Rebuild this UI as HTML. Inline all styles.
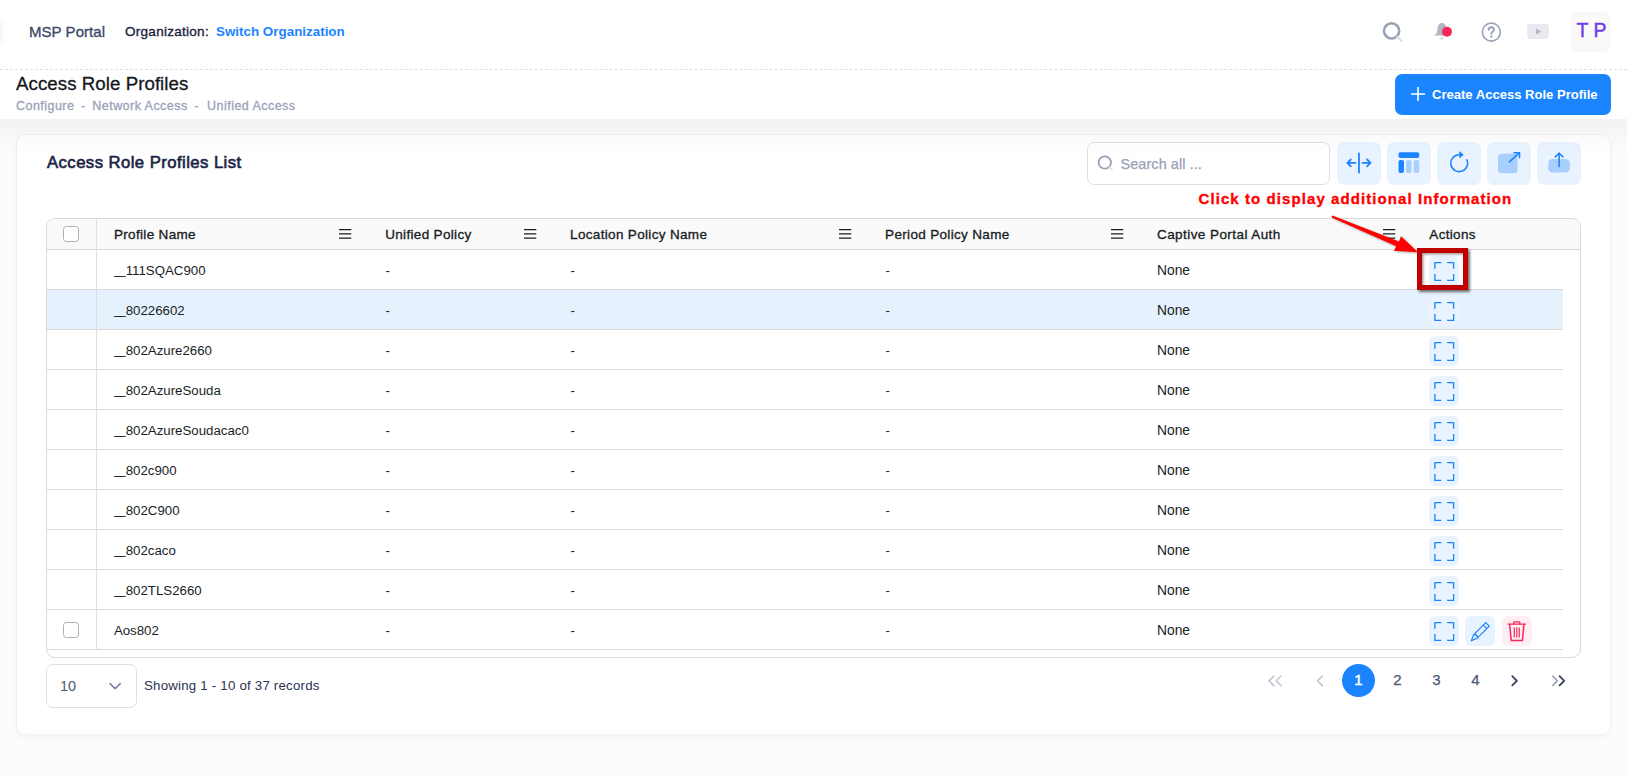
<!DOCTYPE html>
<html>
<head>
<meta charset="utf-8">
<title>Access Role Profiles</title>
<style>
*{box-sizing:border-box;margin:0;padding:0}
html,body{width:1627px;height:776px;overflow:hidden;background:#fcfcfc;font-family:"Liberation Sans",sans-serif;}
.abs{position:absolute}
.t{position:absolute;white-space:nowrap;line-height:1}
#hdr{position:absolute;left:0;top:0;width:1627px;height:70px;background:#fff;border-bottom:1px dashed #dbdfe9}
#tool{position:absolute;left:0;top:70px;width:1627px;height:49px;background:#fff}
#shade{position:absolute;left:0;top:119px;width:1627px;height:40px;background:linear-gradient(rgba(60,50,80,.05),rgba(60,50,80,.028) 35%,rgba(60,50,80,.008) 70%,rgba(60,50,80,0));z-index:5;pointer-events:none}
#card{position:absolute;left:16px;top:134px;width:1595px;height:601px;background:#fff;border:1px solid #f1f1f4;border-radius:9px;box-shadow:0 3px 4px rgba(0,0,0,.03)}
.btnl{position:absolute;top:142px;width:43.500px;height:43px;background:#e9f3ff;border-radius:7px}
#grid{position:absolute;left:46px;top:218px;width:1535px;height:440px;border:1px solid #d9d9d9;border-radius:9px;background:#fff;overflow:hidden}
#ghead{position:absolute;left:0;top:0;width:1533px;height:31px;background:#fafafa;border-bottom:1px solid #d9d9d9}
.row{position:absolute;left:0;width:1516px;height:40px;border-bottom:1px solid #d9d9d9}
.hl{background:#e5f1fc}
.vsep{position:absolute;left:49px;top:0;width:1px;height:430px;background:#e0e0e0}
.h{position:absolute;top:8px;font-size:13.500px;font-weight:400;color:#181d1f;white-space:nowrap;line-height:15px;letter-spacing:0.330px;-webkit-text-stroke:0.330px #181d1f}
.c{position:absolute;top:13px;font-size:13.25px;color:#181d1f;white-space:nowrap;line-height:15px}
.c i{font-style:normal;letter-spacing:-3.100px;position:relative;top:-1.200px;margin-right:3.300px}
.menu{position:absolute;top:11px;width:12px;height:10px}
.menu b{position:absolute;left:0;width:12px;height:1.250px;background:#181d1f}
.ab{position:absolute;top:6px;width:30px;height:30px;border-radius:6px;background:#e9f3ff}
.cb{position:absolute;width:16px;height:16px;border:1px solid #aeb0b9;border-radius:3.500px;background:#fff}
.pg{position:absolute;top:671px;font-size:15px;color:#4b5675;-webkit-text-stroke:0.250px #4b5675;white-space:nowrap;line-height:17px;width:20px;text-align:center}
</style>
</head>
<body>
<div id="hdr"></div>
<div id="tool"></div>
<div id="shade"></div>
<div id="card"></div>
<div class="abs" style="left:-4px;top:20px;width:5px;height:24px;background:#f4f4f5;border-radius:0 3px 3px 0;box-shadow:0 0 9px 3px rgba(0,0,0,.035)"></div>
<div class="t" style="left:29px;top:24px;font-size:15px;color:#414a6a;letter-spacing:0.05px;-webkit-text-stroke:0.350px #414a6a">MSP Portal</div>
<div class="t" style="left:125px;top:24.500px;font-size:13.500px;color:#1b2340;letter-spacing:0.280px;-webkit-text-stroke:0.350px #1b2340">Organization:</div>
<div class="t" style="left:216px;top:25px;font-size:13.4px;font-weight:700;color:#1b84ff">Switch Organization</div>
<svg class="abs" style="left:1378px;top:18px" width="28" height="28" viewBox="0 0 28 28"><circle cx="13.6" cy="12.9" r="7.6" fill="none" stroke="#99a1b7" stroke-width="2.6"/><path d="M19.4 19.2L23.4 22.8" stroke="#dfe2ea" stroke-width="2.6" stroke-linecap="round"/></svg>
<svg class="abs" style="left:1428px;top:18px" width="28" height="28" viewBox="0 0 28 28"><path d="M6.6 16.6c2.6-.6 2.6-3.2 2.9-6.4C9.8 7 11.600 5 14 5s4.200 2 4.500 5.200c.3 3.200.3 5.800 2.900 6.400v1H6.6z" fill="#b5b5c3"/><circle cx="14" cy="20.300" r="1.800" fill="#e1e3ea"/><circle cx="19" cy="13.800" r="5" fill="#f8285a"/></svg>
<svg class="abs" style="left:1477px;top:18px" width="28" height="28" viewBox="0 0 28 28"><circle cx="14.300" cy="14.100" r="9" fill="none" stroke="#99a1b7" stroke-width="1.600"/><path d="M11.600 11.800c0-1.600 1.200-2.600 2.700-2.600s2.700 1 2.700 2.400c0 2-2.700 2-2.700 4.200" fill="none" stroke="#99a1b7" stroke-width="1.900" stroke-linecap="round"/><circle cx="14.300" cy="18.700" r="1.150" fill="#99a1b7"/></svg>
<svg class="abs" style="left:1524px;top:18px" width="28" height="28" viewBox="0 0 28 28"><rect x="3.200" y="5.900" width="21.600" height="15" rx="3" fill="#e9e9ef"/><path d="M12 10.200v6.400l5.400-3.200z" fill="#b5b5c3"/></svg>
<div class="abs" style="left:1571px;top:12px;width:40px;height:40px;background:#f9f9f9;border-radius:7px"></div>
<div class="t" style="left:1576.500px;top:21px;font-size:19.500px;color:#7239ea;letter-spacing:0px;-webkit-text-stroke:0.450px #7239ea">T P</div>

<div class="t" style="left:16px;top:74px;font-size:18.700px;color:#15171c;line-height:20px;-webkit-text-stroke:0.300px #15171c;letter-spacing:0.050px">Access Role Profiles</div>
<div class="t" id="bc" style="left:0;top:99px;font-size:12.500px;color:#99a1b7;line-height:14px;letter-spacing:0.460px;-webkit-text-stroke:0.300px #99a1b7"><span class="abs" style="left:16px">Configure</span><span class="abs" style="left:81px">-</span><span class="abs" style="left:92.300px">Network Access</span><span class="abs" style="left:194.300px">-</span><span class="abs" style="left:207.100px">Unified Access</span></div>
<div class="abs" style="left:1395px;top:74px;width:216px;height:41px;background:#1b84ff;border-radius:7px"></div>
<svg class="abs" style="left:1410px;top:86px" width="16" height="16" viewBox="0 0 16 16"><path d="M8 1v14M1 8h14" stroke="#fff" stroke-width="1.600"/></svg>
<div class="t" style="left:1432px;top:87px;font-size:13.050px;font-weight:700;color:#fff;line-height:15px">Create Access Role Profile</div>

<div class="t" style="left:47px;top:153px;font-size:16.700px;color:#1b2644;line-height:19px;letter-spacing:0.440px;-webkit-text-stroke:0.650px #1b2644">Access Role Profiles List</div>
<div class="abs" style="left:1087px;top:142px;width:243px;height:43px;border:1px solid #dbdfe9;border-radius:7px;background:#fff"></div>
<svg class="abs" style="left:1096px;top:154px" width="18" height="18" viewBox="0 0 18 18"><circle cx="8.800" cy="8.500" r="6.200" fill="none" stroke="#99a1b7" stroke-width="1.800"/><path d="M13.600 13.400L16 15.600" stroke="#dfe2ea" stroke-width="1.800" stroke-linecap="round"/></svg>
<div class="t" style="left:1120.500px;top:156px;font-size:14.500px;color:#99a1b7;line-height:17px;letter-spacing:0.05px;-webkit-text-stroke:0.250px #99a1b7">Search all ...</div>
<div class="btnl" style="left:1337px"></div>
<div class="btnl" style="left:1387px"></div>
<div class="btnl" style="left:1437px"></div>
<div class="btnl" style="left:1487px"></div>
<div class="btnl" style="left:1537px"></div>
<svg class="abs" style="left:1337px;top:142px" width="44" height="43" viewBox="0 0 44 43"><g fill="none" stroke="#1b84ff" stroke-width="1.800" stroke-linecap="round" stroke-linejoin="round"><path d="M21.950 11.400v19.200"/><path d="M18.400 20.900h-7.800M13.800 17.500l-3.400 3.400 3.400 3.400"/><path d="M25.500 20.900h7.800M30.100 17.500l3.400 3.400-3.400 3.400"/></g></svg>
<svg class="abs" style="left:1387px;top:142px" width="44" height="43" viewBox="0 0 44 43"><rect x="11.500" y="10.300" width="20.800" height="5.600" rx="1.900" fill="#1b84ff"/><rect x="11.500" y="18" width="5.500" height="12.900" rx="1.900" fill="#1b84ff"/><rect x="19" y="18" width="5.500" height="12.900" rx="1.900" fill="#a9cfff"/><rect x="26.800" y="18" width="5.500" height="12.900" rx="1.900" fill="#a9cfff"/></svg>
<svg class="abs" style="left:1447px;top:150.600px" width="24.430" height="24.430" viewBox="0 0 16 16" fill="#1b84ff"><path fill-rule="evenodd" d="M8 3a5 5 0 1 0 4.546 2.914.5.5 0 0 1 .908-.417A6 6 0 1 1 8 2z"/><path d="M8 4.466V.534a.25.25 0 0 1 .41-.192l2.360 1.966c.12.1.12.284 0 .384L8.410 4.658A.25.25 0 0 1 8 4.466"/></svg>
<svg class="abs" style="left:1487px;top:142px" width="44" height="43" viewBox="0 0 44 43"><rect x="11" y="11.800" width="19.500" height="19.400" rx="3.600" fill="#a9cfff"/><g fill="none" stroke="#1b84ff" stroke-width="1.600" stroke-linecap="round" stroke-linejoin="round"><path d="M22.400 19.800l9.800-8.900"/><path d="M27 10.700h5.500v5"/></g></svg>
<svg class="abs" style="left:1537px;top:142px" width="44" height="43" viewBox="0 0 44 43"><rect x="11.200" y="16.900" width="21.700" height="13.700" rx="4.600" fill="#a9cfff"/><g fill="none" stroke="#1b84ff" stroke-width="1.600" stroke-linecap="round" stroke-linejoin="round"><path d="M22.100 24.600V11.400"/><path d="M18.300 14.900l3.800-3.700 3.800 3.700"/></g></svg>
<div id="grid"><div id="ghead"><div class="cb" style="left:16.200px;top:7px"></div><div class="h" style="left:66.9px">Profile Name</div><svg class="abs" style="left:292px;top:9px" width="13" height="12" viewBox="0 0 13 12"><path d="M0 1.700h12.300M0 5.950h12.300M0 10.200h12.300" stroke="#181d1f" stroke-width="1.250" fill="none"/></svg><div class="h" style="left:338.2px">Unified Policy</div><svg class="abs" style="left:476.5px;top:9px" width="13" height="12" viewBox="0 0 13 12"><path d="M0 1.700h12.300M0 5.950h12.300M0 10.200h12.300" stroke="#181d1f" stroke-width="1.250" fill="none"/></svg><div class="h" style="left:523.1px">Location Policy Name</div><svg class="abs" style="left:792px;top:9px" width="13" height="12" viewBox="0 0 13 12"><path d="M0 1.700h12.300M0 5.950h12.300M0 10.200h12.300" stroke="#181d1f" stroke-width="1.250" fill="none"/></svg><div class="h" style="left:838.1px">Period Policy Name</div><svg class="abs" style="left:1063.8px;top:9px" width="13" height="12" viewBox="0 0 13 12"><path d="M0 1.700h12.300M0 5.950h12.300M0 10.200h12.300" stroke="#181d1f" stroke-width="1.250" fill="none"/></svg><div class="h" style="left:1110.0px;letter-spacing:0.430px">Captive Portal Auth</div><svg class="abs" style="left:1335.8px;top:9px" width="13" height="12" viewBox="0 0 13 12"><path d="M0 1.700h12.300M0 5.950h12.300M0 10.200h12.300" stroke="#181d1f" stroke-width="1.250" fill="none"/></svg><div class="h" style="left:1382.3px">Actions</div></div><div class="row" style="top:31px"><div class="c" style="left:66.900px"><i>__</i>111SQAC900</div><div class="c" style="left:338.5px">-</div><div class="c" style="left:523.5px">-</div><div class="c" style="left:838.5px">-</div><div class="c" style="left:1110px;font-size:13.800px">None</div><div class="ab" style="left:1382px"><svg width="30" height="30" viewBox="0 0 30 30" style="display:block"><g fill="none" stroke="#1b84ff" stroke-width="1.300"><path d="M5.900 12.800V6.600h6.400M18.200 6.600h6.400v6.200M24.600 17.900v6.400h-6.400M12.300 24.300H5.900v-6.400"/></g></svg></div></div><div class="row hl" style="top:71px"><div class="c" style="left:66.900px"><i>__</i>80226602</div><div class="c" style="left:338.5px">-</div><div class="c" style="left:523.5px">-</div><div class="c" style="left:838.5px">-</div><div class="c" style="left:1110px;font-size:13.800px">None</div><div class="ab" style="left:1382px"><svg width="30" height="30" viewBox="0 0 30 30" style="display:block"><g fill="none" stroke="#1b84ff" stroke-width="1.300"><path d="M5.900 12.800V6.600h6.400M18.200 6.600h6.400v6.200M24.600 17.900v6.400h-6.400M12.300 24.300H5.900v-6.400"/></g></svg></div></div><div class="row" style="top:111px"><div class="c" style="left:66.900px"><i>__</i>802Azure2660</div><div class="c" style="left:338.5px">-</div><div class="c" style="left:523.5px">-</div><div class="c" style="left:838.5px">-</div><div class="c" style="left:1110px;font-size:13.800px">None</div><div class="ab" style="left:1382px"><svg width="30" height="30" viewBox="0 0 30 30" style="display:block"><g fill="none" stroke="#1b84ff" stroke-width="1.300"><path d="M5.900 12.800V6.600h6.400M18.200 6.600h6.400v6.200M24.600 17.900v6.400h-6.400M12.300 24.300H5.900v-6.400"/></g></svg></div></div><div class="row" style="top:151px"><div class="c" style="left:66.900px"><i>__</i>802AzureSouda</div><div class="c" style="left:338.5px">-</div><div class="c" style="left:523.5px">-</div><div class="c" style="left:838.5px">-</div><div class="c" style="left:1110px;font-size:13.800px">None</div><div class="ab" style="left:1382px"><svg width="30" height="30" viewBox="0 0 30 30" style="display:block"><g fill="none" stroke="#1b84ff" stroke-width="1.300"><path d="M5.900 12.800V6.600h6.400M18.200 6.600h6.400v6.200M24.600 17.900v6.400h-6.400M12.300 24.300H5.900v-6.400"/></g></svg></div></div><div class="row" style="top:191px"><div class="c" style="left:66.900px"><i>__</i>802AzureSoudacac0</div><div class="c" style="left:338.5px">-</div><div class="c" style="left:523.5px">-</div><div class="c" style="left:838.5px">-</div><div class="c" style="left:1110px;font-size:13.800px">None</div><div class="ab" style="left:1382px"><svg width="30" height="30" viewBox="0 0 30 30" style="display:block"><g fill="none" stroke="#1b84ff" stroke-width="1.300"><path d="M5.900 12.800V6.600h6.400M18.200 6.600h6.400v6.200M24.600 17.900v6.400h-6.400M12.300 24.300H5.900v-6.400"/></g></svg></div></div><div class="row" style="top:231px"><div class="c" style="left:66.900px"><i>__</i>802c900</div><div class="c" style="left:338.5px">-</div><div class="c" style="left:523.5px">-</div><div class="c" style="left:838.5px">-</div><div class="c" style="left:1110px;font-size:13.800px">None</div><div class="ab" style="left:1382px"><svg width="30" height="30" viewBox="0 0 30 30" style="display:block"><g fill="none" stroke="#1b84ff" stroke-width="1.300"><path d="M5.900 12.800V6.600h6.400M18.200 6.600h6.400v6.200M24.600 17.900v6.400h-6.400M12.300 24.300H5.900v-6.400"/></g></svg></div></div><div class="row" style="top:271px"><div class="c" style="left:66.900px"><i>__</i>802C900</div><div class="c" style="left:338.5px">-</div><div class="c" style="left:523.5px">-</div><div class="c" style="left:838.5px">-</div><div class="c" style="left:1110px;font-size:13.800px">None</div><div class="ab" style="left:1382px"><svg width="30" height="30" viewBox="0 0 30 30" style="display:block"><g fill="none" stroke="#1b84ff" stroke-width="1.300"><path d="M5.900 12.800V6.600h6.400M18.200 6.600h6.400v6.200M24.600 17.900v6.400h-6.400M12.300 24.300H5.900v-6.400"/></g></svg></div></div><div class="row" style="top:311px"><div class="c" style="left:66.900px"><i>__</i>802caco</div><div class="c" style="left:338.5px">-</div><div class="c" style="left:523.5px">-</div><div class="c" style="left:838.5px">-</div><div class="c" style="left:1110px;font-size:13.800px">None</div><div class="ab" style="left:1382px"><svg width="30" height="30" viewBox="0 0 30 30" style="display:block"><g fill="none" stroke="#1b84ff" stroke-width="1.300"><path d="M5.900 12.800V6.600h6.400M18.200 6.600h6.400v6.200M24.600 17.900v6.400h-6.400M12.300 24.300H5.900v-6.400"/></g></svg></div></div><div class="row" style="top:351px"><div class="c" style="left:66.900px"><i>__</i>802TLS2660</div><div class="c" style="left:338.5px">-</div><div class="c" style="left:523.5px">-</div><div class="c" style="left:838.5px">-</div><div class="c" style="left:1110px;font-size:13.800px">None</div><div class="ab" style="left:1382px"><svg width="30" height="30" viewBox="0 0 30 30" style="display:block"><g fill="none" stroke="#1b84ff" stroke-width="1.300"><path d="M5.900 12.800V6.600h6.400M18.200 6.600h6.400v6.200M24.600 17.900v6.400h-6.400M12.300 24.300H5.900v-6.400"/></g></svg></div></div><div class="row" style="top:391px"><div class="cb" style="left:16.200px;top:12px"></div><div class="c" style="left:66.900px">Aos802</div><div class="c" style="left:338.5px">-</div><div class="c" style="left:523.5px">-</div><div class="c" style="left:838.5px">-</div><div class="c" style="left:1110px;font-size:13.800px">None</div><div class="ab" style="left:1382px"><svg width="30" height="30" viewBox="0 0 30 30" style="display:block"><g fill="none" stroke="#1b84ff" stroke-width="1.300"><path d="M5.900 12.800V6.600h6.400M18.200 6.600h6.400v6.200M24.600 17.900v6.400h-6.400M12.300 24.300H5.900v-6.400"/></g></svg></div><div class="ab" style="left:1418.3px"><svg width="30" height="30" viewBox="0 0 30 30" style="display:block"><g transform="translate(5.700,6) scale(1.200)" fill="#1b84ff"><path d="M12.146.146a.5.5 0 0 1 .708 0l3 3a.5.5 0 0 1 0 .708l-10 10a.5.500 0 0 1-.168.110l-5 2a.5.500 0 0 1-.65-.65l2-5a.5.500 0 0 1 .110-.168zM11.207 2.500 13.500 4.793 14.793 3.500 12.500 1.207zm1.586 3L10.500 3.207 4 9.707V10h.5a.5.500 0 0 1 .5.500v.5h.5a.5.500 0 0 1 .5.500v.5h.293zm-9.761 5.175-.106.106-1.528 3.821 3.821-1.528.106-.106A.5.500 0 0 1 5 12.500V12h-.5a.5.500 0 0 1-.5-.5V11h-.5a.5.500 0 0 1-.468-.325"/></g></svg></div><div class="ab" style="left:1455px;background:#ffeef3"><svg width="30" height="30" viewBox="0 0 30 30" style="display:block"><g fill="none" stroke="#f8285a" stroke-linecap="round" stroke-linejoin="round"><path d="M6 8.100H23.500" stroke-width="1.300"/><path d="M11.800 8V6.400a.6.600 0 0 1 .6-.6h4.800a.6.600 0 0 1 .6.600V8" stroke-width="1.300"/><path d="M7.700 8.600l1.500 15.900h11.200l1.500-15.900" stroke-width="1.500"/><path d="M12.300 11.800V21M14.800 11.800V21M17.250 11.800V21" stroke-width="1.200"/></g></svg></div></div><div class="vsep"></div></div>

<div class="abs" style="left:46px;top:664px;width:91px;height:44px;border:1px solid #dbdfe9;border-radius:7px;background:#fff"></div>
<div class="t" style="left:60px;top:678px;font-size:14.500px;color:#4b5675;line-height:16px">10</div>
<svg class="abs" style="left:108px;top:680px" width="14" height="12" viewBox="0 0 14 12"><path d="M2 3.600l5.100 5 5.100-5" fill="none" stroke="#78829d" stroke-width="1.500" stroke-linecap="round" stroke-linejoin="round"/></svg>
<div class="t" style="left:144px;top:678px;font-size:13.300px;color:#2b3350;line-height:15px;letter-spacing:0.2px">Showing 1 - 10 of 37 records</div>
<svg class="abs" style="left:1266px;top:672px" width="20" height="18" viewBox="0 0 20 18"><g fill="none" stroke-width="1.600" stroke-linecap="round" stroke-linejoin="round"><path d="M7.800 4L3 8.800l4.800 4.800" stroke="#bcc1d1"/><path d="M15 4l-4.800 4.800 4.800 4.800" stroke="#c6cad8"/></g></svg>
<svg class="abs" style="left:1311px;top:672px" width="18" height="18" viewBox="0 0 18 18"><path d="M11.300 4L6.500 8.800l4.800 4.800" fill="none" stroke="#bcc1d1" stroke-width="1.600" stroke-linecap="round" stroke-linejoin="round"/></svg>
<div class="abs" style="left:1342px;top:664px;width:33px;height:33px;border-radius:50%;background:#1b84ff"></div>
<div class="pg" style="left:1348.500px;color:#fff;-webkit-text-stroke:0.500px #fff">1</div>
<div class="pg" style="left:1387.500px">2</div>
<div class="pg" style="left:1426.500px">3</div>
<div class="pg" style="left:1465.500px">4</div>
<svg class="abs" style="left:1505px;top:672px" width="18" height="18" viewBox="0 0 18 18"><path d="M7.300 4.200l4.600 4.600-4.600 4.600" fill="none" stroke="#363f5e" stroke-width="1.800" stroke-linecap="round" stroke-linejoin="round"/></svg>
<svg class="abs" style="left:1549px;top:672px" width="20" height="18" viewBox="0 0 20 18"><g fill="none" stroke-width="1.800" stroke-linecap="round" stroke-linejoin="round"><path d="M3.800 4.200l4.600 4.600-4.600 4.600" stroke="#a3a9bd"/><path d="M10.600 4.200l4.600 4.600-4.600 4.600" stroke="#363f5e"/></g></svg>
<div class="t" style="left:1198.500px;top:190px;font-size:15px;font-weight:700;color:#ff0000;line-height:17px;letter-spacing:1.080px;-webkit-text-stroke:0.350px #ff0000">Click to display additional Information</div>
<svg class="abs" style="left:1320px;top:205px;overflow:visible" width="110" height="60" viewBox="0 0 110 60"><g filter="drop-shadow(1.500px 1.500px 1px rgba(0,0,0,.35))"><path d="M12.300 10.600L79 36.600 81 31.200 98 47.300 73.800 45.800 76.200 41.200 11.700 12.600z" fill="#ff0000"/></g></svg>
<div class="abs" style="left:1417px;top:248px;width:51px;height:42px;border:5px solid #c00000;box-shadow:1.500px 1.500px 2.500px rgba(0,0,0,.55),inset 1.500px 1.500px 2.500px rgba(0,0,0,.4)"></div>

</body>
</html>
